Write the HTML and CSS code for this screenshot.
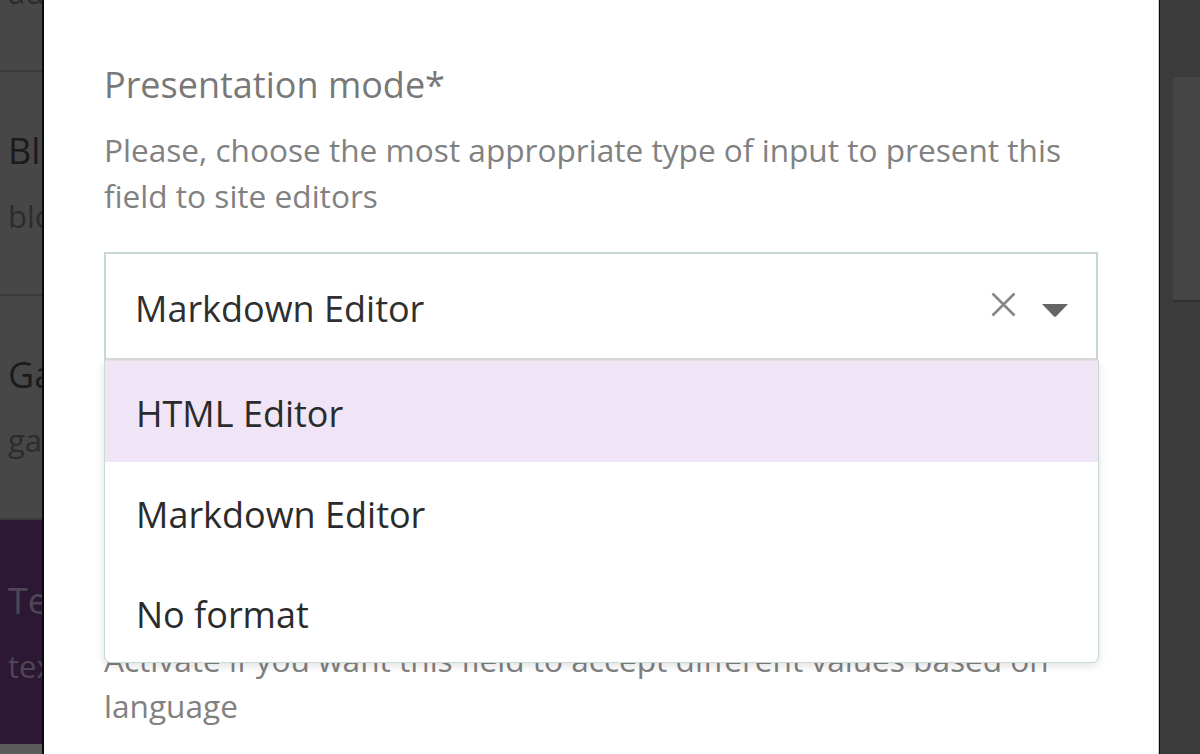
FILE: index.html
```html
<!DOCTYPE html>
<html lang="en">
<head>
<meta charset="utf-8">
<title>Presentation mode</title>
<link rel="stylesheet" href="styles.css">
</head>
<body>
<div class="page">
  <aside class="bg-list">
    <div class="bg-item first">
      <div class="bg-title">Address</div>
      <div class="bg-sub">address</div>
    </div>
    <div class="bg-item">
      <div class="bg-title">Blog</div>
      <div class="bg-sub">blog</div>
    </div>
    <div class="bg-item">
      <div class="bg-title">Gallery</div>
      <div class="bg-sub">gallery</div>
    </div>
    <div class="bg-item active">
      <div class="bg-title">Text</div>
      <div class="bg-sub">text</div>
    </div>
    <div class="bg-footer"></div>
  </aside>

  <main class="modal">
    <section class="field">
      <h2 class="field-label">Presentation mode*</h2>
      <p class="field-help">Please, choose the most appropriate type of input to present this field to site editors</p>
      <div class="select">
        <div class="select-control">
          <span class="select-value">Markdown Editor</span>
          <span class="select-clear">
            <svg width="25" height="25" viewBox="0 0 25 25"><path d="M1.5 1.5 L23.5 23.5 M23.5 1.5 L1.5 23.5" stroke="#868686" stroke-width="2.6" fill="none"/></svg>
          </span>
          <span class="select-arrow">
            <svg width="26" height="13" viewBox="0 0 26 13"><path d="M0 0 H26 L14 12.4 Q13 13.2 12 12.4 Z" fill="#656565"/></svg>
          </span>
        </div>
        <ul class="select-menu">
          <li class="option is-focused">HTML Editor</li>
          <li class="option">Markdown Editor</li>
          <li class="option">No format</li>
        </ul>
      </div>
    </section>

    <section class="field localizable">
      <h2 class="field-label">Localizable</h2>
      <div class="toggle"><span class="toggle-knob"></span></div>
      <p class="field-help help-after-toggle">Activate if you want this field to accept different values based on language</p>
    </section>
  </main>

  <aside class="bg-right">
    <div class="bg-panel"></div>
  </aside>
</div>
</body>
</html>
```

FILE: styles.css
```css
* {
  box-sizing: border-box;
}

html, body {
  margin: 0;
  padding: 0;
}

body {
  width: 1200px;
  height: 754px;
  overflow: hidden;
  background: #3c3c3c;
  font-family: "Open Sans", "Noto Sans", "Liberation Sans", sans-serif;
}

.page {
  display: flex;
  width: 1200px;
  height: 754px;
  overflow: hidden;
}

/* ---------- dimmed page behind the modal (left) ---------- */
.bg-list {
  width: 42px;
  flex: none;
  background: #474747;
  display: flex;
  flex-direction: column;
  overflow: hidden;
}

.bg-item {
  flex: none;
  height: 224px;
  padding: 57px 0 0 8px;
  border-bottom: 2px solid #3a3a3a;
  white-space: nowrap;
}

.bg-item.first {
  margin-top: -152px;
}

.bg-title {
  font-size: 36px;
  line-height: 44px;
  color: #1b1b1b;
}

.bg-sub {
  margin-top: 21px;
  font-size: 31px;
  line-height: 45px;
  color: #2c2c2c;
}

.bg-item.active {
  background: #2c1734;
  border-bottom: none;
  padding-top: 59px;
}

.bg-item.active .bg-title,
.bg-item.active .bg-sub {
  color: #4f4654;
}

.bg-footer {
  flex: 1;
  background: #5c5c5c;
}

/* ---------- dimmed page behind the modal (right) ---------- */
.bg-right {
  width: 41px;
  flex: none;
  background: #3b3b3b;
  padding: 77px 0 0 14px;
}

.bg-panel {
  height: 225px;
  background: #454545;
  border-bottom: 2px solid #303030;
}

/* ---------- modal ---------- */
.modal {
  width: 1117px;
  flex: none;
  background: #ffffff;
  border-left: 2px solid #0b0b0b;
  border-right: 1px solid #cdcdcd;
  box-shadow: 1px 0 0 #0b0b0b;
  padding: 63px 60px 0 60px;
  position: relative;
  z-index: 1;
}

.field-label {
  margin: 0;
  font-size: 36px;
  line-height: 44px;
  font-weight: 400;
  color: #787878;
}

.field-help {
  margin: 20px 0 0;
  font-size: 31.6px;
  line-height: 46px;
  color: #818181;
}

/* ---------- select ---------- */
.select {
  position: relative;
  margin-top: 33px;
}

.select-control {
  height: 108px;
  display: flex;
  align-items: center;
  padding: 33px 28px 27px 29px;
  border: 2px solid #c6d8d1;
  border-bottom-color: #dcdcdc;
  background: #fff;
}

.select-value {
  flex: 1;
  font-size: 36px;
  line-height: 44px;
  color: #2f2f2f;
}

.select-clear {
  display: flex;
  margin-bottom: 9px;
}

.select-arrow {
  display: flex;
  margin-left: 26px;
  margin-top: 2px;
}

.select-menu {
  position: absolute;
  top: 100%;
  left: 0;
  right: -1px;
  margin: 0;
  padding: 0;
  list-style: none;
  background: #fff;
  border: 1px solid #c9dad4;
  border-top: 1px solid #e2e2e2;
  border-radius: 0 0 7px 7px;
  box-shadow: 0 3px 8px rgba(0, 0, 0, 0.12);
  overflow: hidden;
  z-index: 5;
}

.option {
  height: 101px;
  padding: 31px 0 0 31px;
  font-size: 36px;
  line-height: 44px;
  color: #2b2b2b;
}

.option + .option {
  height: 100px;
}

.option.is-focused {
  background: #f0e5f6;
}

/* ---------- localizable (partly hidden under menu) ---------- */
.localizable {
  margin-top: 140px;
}

.toggle {
  margin-top: 23px;
  width: 90px;
  height: 48px;
  border-radius: 24px;
  background: #d8d8d8;
  padding: 4px;
}

.toggle-knob {
  display: block;
  width: 40px;
  height: 40px;
  border-radius: 50%;
  background: #fff;
}

.help-after-toggle {
  margin-top: 22px;
}
```
